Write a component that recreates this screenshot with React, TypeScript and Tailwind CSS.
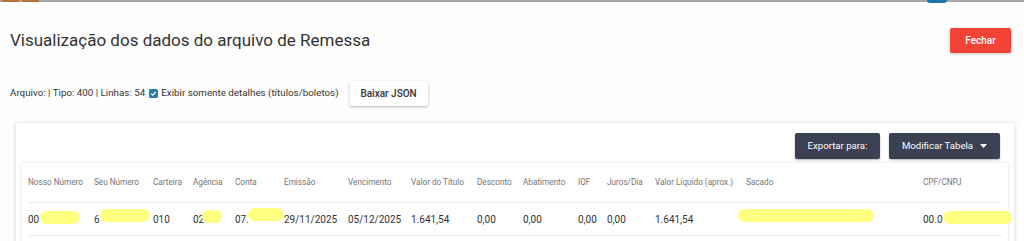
import React from "react";

const cols = "grid grid-cols-[66px_59px_40px_42px_49px_64px_63px_66px_46px_55px_29px_48px_91px_177px_1fr]";

const headers = [
  "Nosso Número",
  "Seu Número",
  "Carteira",
  "Agência",
  "Conta",
  "Emissão",
  "Vencimento",
  "Valor do Título",
  "Desconto",
  "Abatimento",
  "IOF",
  "Juros/Dia",
  "Valor Líquido (aprox.)",
  "Sacado",
  "CPF/CNPJ",
];

function Hl({ left, width, top }: { left: number; width: number; top: number }) {
  return (
    <span
      className="absolute h-[13px] rounded-full bg-[#ffff80]"
      style={{ left, width, top }}
    />
  );
}

export default function App() {
  return (
    <div
      className="w-[1024px] h-[241px] overflow-hidden bg-[#fefefe] text-[#333]"
      style={{ fontFamily: "Roboto, 'Liberation Sans', sans-serif" }}
    >
      {/* top strip */}
      <div className="relative h-[2px] bg-[#a6a6a6]">
        <span className="absolute left-[2px] top-0 h-[2px] w-[17px] bg-[#b8733a]" />
        <span className="absolute left-[22px] top-0 h-[2px] w-[17px] bg-[#b8733a]" />
        <span className="absolute left-[927px] top-0 h-[3px] w-[20px] rounded-b bg-[#1f74ac]" />
      </div>

      <div className="px-[10px]">
        {/* header */}
        <div className="mt-[26px] flex items-center justify-between">
          <h1 className="text-[17px] leading-[25px] text-[#333]">
            Visualização dos dados do arquivo de Remessa
          </h1>
          <button className="mr-[3px] h-[25px] w-[61px] rounded-[2px] bg-[#f44336] text-[10px] font-medium text-white shadow-[0_1px_3px_rgba(0,0,0,0.25)]">
            Fechar
          </button>
        </div>

        {/* info row */}
        <div className="mt-[28px] flex items-center text-[9.8px] text-[#333]">
          <span>Arquivo: | Tipo: 400 | Linhas: 54</span>
          <span className="ml-[4px] mr-[3px] flex h-[9px] w-[9px] items-center justify-center rounded-[1.5px] bg-[#2a7ea6]">
            <svg width="7" height="7" viewBox="0 0 10 10">
              <path d="M1.8 5.2 L4 7.4 L8.3 2.6" fill="none" stroke="white" strokeWidth="1.8" />
            </svg>
          </span>
          <span>Exibir somente detalhes (títulos/boletos)</span>
          <button className="ml-[11px] h-[25px] w-[78px] rounded-[2px] bg-white text-[10px] font-medium text-[#333] shadow-[0_1px_3px_rgba(0,0,0,0.3)]">
            Baixar JSON
          </button>
        </div>

        {/* card */}
        <div className="ml-[6px] mt-[17px] bg-white px-[6px] pt-[10px] shadow-[0_1px_5px_rgba(0,0,0,0.18)]">
          <div className="flex justify-end gap-[9px] pr-[8px]">
            <button className="h-[26px] w-[85px] rounded-[2px] bg-[#3b4052] text-[9.6px] text-white shadow-[0_1px_2px_rgba(0,0,0,0.3)]">
              Exportar para:
            </button>
            <button className="flex h-[26px] w-[111px] items-center justify-center gap-[7px] rounded-[2px] bg-[#3b4052] text-[9.6px] text-white shadow-[0_1px_2px_rgba(0,0,0,0.3)]">
              Modificar Tabela
              <svg width="7" height="4" viewBox="0 0 7 4">
                <path d="M0 0 L7 0 L3.5 4 Z" fill="white" />
              </svg>
            </button>
          </div>

          <div className="mt-[4px] bg-white px-[6px] shadow-[0_0_4px_rgba(0,0,0,0.12)]">
            <div className={`${cols} h-[40px] items-center border-b border-[#ececec] text-[8.2px] text-[#757575]`}>
              {headers.map((h) => (
                <div key={h} className="whitespace-nowrap">
                  {h}
                </div>
              ))}
            </div>
            <div className={`${cols} h-[33px] items-center border-b border-[#ececec] text-[10px] text-[#333]`}>
              <div className="relative">
                00
                <Hl left={12} width={40} top={-1} />
              </div>
              <div className="relative">
                6
                <Hl left={6} width={50} top={-3} />
              </div>
              <div>010</div>
              <div className="relative">
                02
                <Hl left={9} width={20} top={-2} />
              </div>
              <div className="relative">
                07.
                <Hl left={13} width={36} top={-4} />
              </div>
              <div>29/11/2025</div>
              <div>05/12/2025</div>
              <div>1.641,54</div>
              <div>0,00</div>
              <div>0,00</div>
              <div>0,00</div>
              <div>0,00</div>
              <div>1.641,54</div>
              <div className="relative">
                &nbsp;
                <Hl left={-8} width={136} top={-3} />
              </div>
              <div className="relative">
                00.0
                <Hl left={20} width={69} top={-1} />
              </div>
            </div>
            <div className="h-[20px]" />
          </div>
        </div>
      </div>
    </div>
  );
}
